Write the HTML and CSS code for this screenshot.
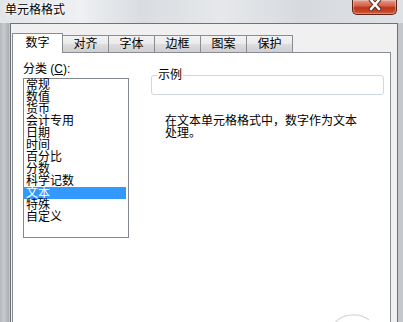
FILE: index.html
```html
<!DOCTYPE html>
<html lang="zh-CN">

<head>
    <meta charset="UTF-8">
    <meta name="viewport" content="width=device-width, initial-scale=1.0">
    <title>单元格格式</title>
    <link rel="stylesheet" href="styles.css">
</head>

<body>
    <div class="win">
        <div class="win-tit">
            <span class="win-name">单元格格式</span>
            <a href="#" class="win-close">
                <svg width="16" height="11" viewBox="0 0 16 11">
                    <path d="M4 0 L12 9 M12 0 L4 9" stroke="#5a2a20" stroke-width="4.5" stroke-linecap="round" />
                    <path d="M4 0 L12 9 M12 0 L4 9" stroke="#fff" stroke-width="2.6" stroke-linecap="round" />
                </svg>
            </a>
        </div>
        <div class="win-con">
            <ul class="tab-tit">
                <li class="select"><a href="#">数字</a></li>
                <li><a href="#">对齐</a></li>
                <li><a href="#">字体</a></li>
                <li><a href="#">边框</a></li>
                <li><a href="#">图案</a></li>
                <li><a href="#">保护</a></li>
            </ul>
            <div class="tab-page">
                <div class="col-left">
                    <div class="label">分类 (<u>C</u>):</div>
                    <ul class="list">
                        <li>常规</li>
                        <li>数值</li>
                        <li>货币</li>
                        <li>会计专用</li>
                        <li>日期</li>
                        <li>时间</li>
                        <li>百分比</li>
                        <li>分数</li>
                        <li>科学记数</li>
                        <li class="select">文本</li>
                        <li>特殊</li>
                        <li>自定义</li>
                    </ul>
                </div>
                <div class="col-right">
                    <fieldset class="sample">
                        <legend>示例</legend>
                    </fieldset>
                    <p class="desc">在文本单元格格式中，数字作为文本处理。</p>
                </div>
                <svg class="mark" width="40" height="14" viewBox="0 0 40 14">
                    <path d="M2 13 C8 4, 26 2, 36 10" fill="none" stroke="#d8d8d8" stroke-width="1.2" />
                </svg>
            </div>
        </div>
    </div>
</body>

</html>
```

FILE: styles.css
```css
* {
    padding: 0;
    margin: 0;
    list-style: none;
    box-sizing: border-box;
}

body {
    width: 403px;
    height: 322px;
    overflow: hidden;
    font-family: "Liberation Sans", "Noto Sans CJK SC", sans-serif;
    font-size: 12px;
    color: #000;
    background: linear-gradient(90deg, #b4b8bc 0px, #c8ccd0 4px, #a9adb2 9px, #dcdfe2 10px, #d3d7db 60%, #c4c8cc 100%);
}

a {
    color: #000;
    text-decoration: none;
}

.win-tit {
    display: flex;
    justify-content: space-between;
    align-items: flex-start;
    height: 23px;
    background: linear-gradient(90deg, #e2e5e8 0%, #eef0f2 20%, #d9dde1 35%, #e6e8ea 55%, #d6dadf 75%, #dfe2e5 100%);
}

.win-name {
    padding: 3px 0 0 5px;
    font-size: 12px;
    line-height: 14px;
    text-shadow: 0 0 6px #fff, 0 0 3px #fff;
}

.win-close {
    display: flex;
    justify-content: center;
    align-items: flex-start;
    width: 45px;
    height: 15px;
    margin-right: 6px;
    border: 1px solid #5e2418;
    border-top: none;
    border-radius: 0 0 5px 5px;
    background: linear-gradient(#e39a88 0%, #d4644b 40%, #bf3519 55%, #cc5534 100%);
    box-shadow: inset 0 0 1px 1px rgba(255, 255, 255, .35);
}

.win-close svg {
    display: block;
}

.win-con {
    height: 299px;
    margin: 0 5px 0 10px;
    padding: 9px 6px 0 1px;
    border: 1px solid #6f7378;
    border-bottom: none;
    background: #f0f0f0;
}

.tab-tit {
    display: flex;
    align-items: flex-end;
    height: 19px;
    position: relative;
    z-index: 1;
}

.tab-tit li {
    width: 47px;
    height: 17px;
    margin-left: -1px;
    border: 1px solid #898c95;
    border-bottom: none;
    background: linear-gradient(#f2f2f2, #ebebeb 50%, #dddddd 51%, #cfcfcf);
    text-align: center;
    line-height: 15px;
}

.tab-tit li a {
    display: block;
    padding-top: 1px;
}

.tab-tit li.select {
    width: 51px;
    height: 20px;
    margin: 0 0 -1px 0;
    background: #fff;
}

.tab-tit li.select a {
    padding-top: 2px;
}

.tab-page {
    display: flex;
    height: 280px;
    padding: 7px 0 0 10px;
    border: 1px solid #898c95;
    background: #fff;
    position: relative;
}

.label {
    line-height: 18px;
    height: 18px;
}

.list {
    width: 106px;
    height: 160px;
    border: 1px solid #828790;
    background: #fff;
}

.list li {
    height: 12px;
    margin-right: 2px;
    padding-left: 2px;
    line-height: 12px;
    white-space: nowrap;
}

.list li.select {
    background: #3399ff;
    color: #fff;
}

.col-right {
    margin-left: 22px;
    padding-top: 9px;
}

.sample {
    width: 233px;
    height: 26px;
    padding: 0 5px;
    border: 1px solid #d0d8de;
    border-radius: 3px;
}

.sample legend {
    padding: 0 1px;
    line-height: 12px;
}

.desc {
    width: 198px;
    margin: 20px 0 0 14px;
    line-height: 12px;
}

.mark {
    position: absolute;
    left: 320px;
    top: 257px;
}
```
